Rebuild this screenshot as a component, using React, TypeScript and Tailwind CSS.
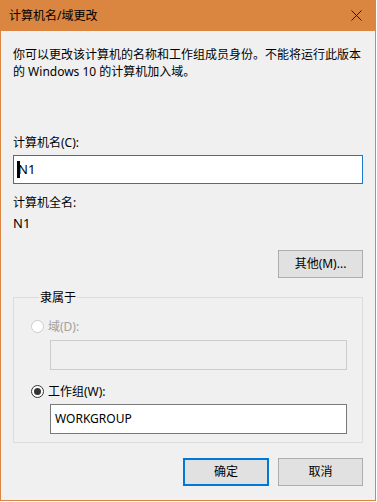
import React from 'react';

const font = { fontFamily: '"Noto Sans", "Noto Sans CJK SC", sans-serif' };

function Radio({ checked, disabled }: { checked?: boolean; disabled?: boolean }) {
  return (
    <span
      className={`w-[13px] h-[13px] rounded-full border flex items-center justify-center bg-white shrink-0 ${
        disabled ? 'border-[#cccccc]' : 'border-[#333333]'
      }`}
    >
      {checked && <span className="w-[7px] h-[7px] rounded-full bg-[#333333]" />}
    </span>
  );
}

export default function App() {
  return (
    <div
      className="w-[376px] h-[501px] flex flex-col bg-[#f0f0f0] border border-t-0 border-[#da8540] text-[12px] text-black"
      style={font}
    >
      {/* Title bar */}
      <div className="h-[31px] shrink-0 bg-[#da8540] flex items-center justify-between pl-[8px] pr-[10px]">
        <span className="leading-none">计算机名/域更改</span>
        <svg width="11" height="11" viewBox="0 0 11 11" className="mr-[3px]">
          <path d="M0.5 0.5 L10.5 10.5 M10.5 0.5 L0.5 10.5" stroke="#1a1a1a" strokeWidth="1" />
        </svg>
      </div>

      {/* Body */}
      <div className="flex flex-col px-[12px]">
        <p className="mt-[15px] leading-[17px]">
          你可以更改该计算机的名称和工作组成员身份。不能将运行此版本的 Windows 10 的计算机加入域。
        </p>

        <div className="mt-[54px] leading-[17px]">计算机名(C):</div>
        <div className="relative mt-[4px] h-[29px] border border-[#1979ca] bg-white flex items-center pl-[4px]">
          <span className="absolute left-[3px] top-[5px] w-[3px] h-[17px] bg-black" />
          <span className="text-[13px]">N1</span>
        </div>

        <div className="mt-[10px] leading-[17px]">计算机全名:</div>
        <div className="mt-[4px] leading-[17px] text-[13px]">N1</div>

        <div className="flex justify-end mt-[18px]">
          <button className="w-[85px] h-[28px] bg-[#e1e1e1] border border-[#adadad] leading-none">
            其他(M)...
          </button>
        </div>

        <fieldset className="mt-[11px] h-[154px] border border-[#dcdcdc] pl-[17px] pr-[15px]">
          <legend className="ml-[8px] px-[1px] leading-[17px]">隶属于</legend>
          <div className="flex items-center gap-[4px] mt-[12px] text-[#a0a0a0] leading-[17px]">
            <Radio disabled />
            <span>域(D):</span>
          </div>
          <div className="ml-[19px] mt-[5px] h-[30px] border border-[#cccccc] bg-[#f0f0f0]" />
          <div className="flex items-center gap-[4px] mt-[13px] leading-[17px]">
            <Radio checked />
            <span>工作组(W):</span>
          </div>
          <div className="ml-[19px] mt-[4px] h-[30px] border border-[#7a7a7a] bg-white flex items-center pl-[4px]">
            WORKGROUP
          </div>
        </fieldset>

        <div className="flex justify-end gap-[9px] mt-[15px]">
          <button className="w-[86px] h-[28px] bg-[#e1e1e1] border-2 border-[#0078d7] leading-none">
            确定
          </button>
          <button className="w-[85px] h-[28px] bg-[#e1e1e1] border border-[#adadad] leading-none">
            取消
          </button>
        </div>
      </div>
    </div>
  );
}
